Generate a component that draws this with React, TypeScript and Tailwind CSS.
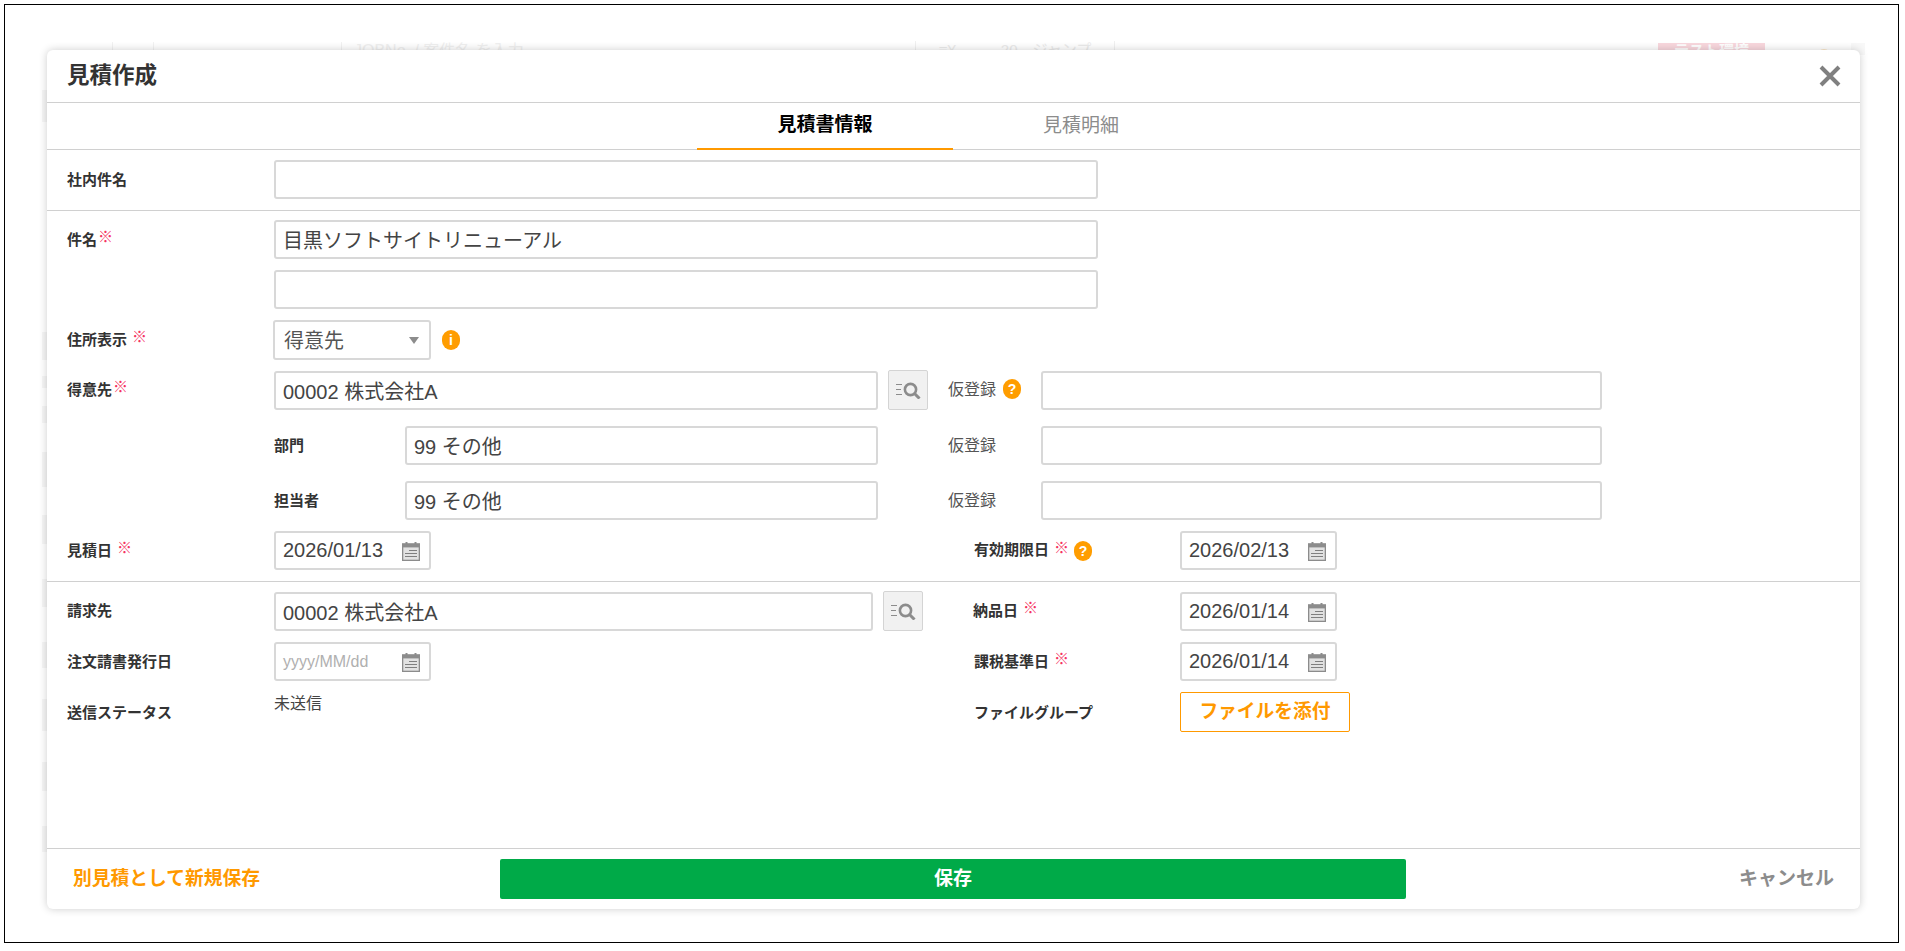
import type { ReactNode } from "react"

const FONT = "[font-family:'Liberation_Sans','Noto_Sans_CJK_JP',sans-serif]"

function Req({ gap }: { gap?: boolean }) {
  return (
    <span className={`text-[15px] font-normal leading-none text-[#f5335f] relative -top-[3px] ${gap ? "ml-[5px]" : "ml-[1px]"}`}>
      ※
    </span>
  )
}

function Label({ children }: { children: ReactNode }) {
  return <span className="text-[15px] font-bold text-[#333] whitespace-nowrap">{children}</span>
}

function TextBox({ value, w, placeholder }: { value?: string; w: string; placeholder?: string }) {
  return (
    <input
      readOnly
      value={value ?? ""}
      placeholder={placeholder}
      className={`${w} h-[39px] shrink-0 rounded-[3px] border-2 border-[#d8d8d8] bg-white px-[7px] text-[20px] text-[#444] outline-none`}
    />
  )
}

function CalendarIcon() {
  return (
    <svg width="18" height="19" viewBox="0 0 18 19" className="absolute right-[9px] top-[9px]">
      <rect x="0.5" y="2" width="17" height="16.5" fill="#e2e2e2" stroke="#8c8c8c" strokeWidth="1.6" />
      <rect x="0" y="2" width="18" height="3.4" fill="#8c8c8c" />
      <rect x="3.5" y="0" width="2" height="3" fill="#8c8c8c" />
      <rect x="12.5" y="0" width="2" height="3" fill="#8c8c8c" />
      <path d="M7 8.5h8M3 11.5h12M3 14.5h12" stroke="#7f7f7f" strokeWidth="1.2" />
    </svg>
  )
}

function DateBox({ value }: { value?: string }) {
  return (
    <div className="relative w-[157px] h-[39px] shrink-0 rounded-[3px] border-2 border-[#d8d8d8] bg-white">
      <span className={`absolute left-[7px] top-0 leading-[35px] ${value ? "text-[20px] text-[#444]" : "text-[16px] text-[#b0b0b0]"}`}>
        {value ?? "yyyy/MM/dd"}
      </span>
      <CalendarIcon />
    </div>
  )
}

function SearchButton() {
  return (
    <button className="w-[40px] h-[40px] shrink-0 rounded-[2px] border border-[#d4d4d4] bg-[#f1f1f1] flex items-center justify-center">
      <svg width="25" height="17" viewBox="0 0 25 17">
        <path d="M0 2.5h6M0 7.5h5M0 12.5h6" stroke="#8c8c8c" strokeWidth="1.2" fill="none" />
        <circle cx="14.5" cy="7.5" r="5.6" stroke="#8c8c8c" strokeWidth="2.6" fill="none" />
        <path d="M18.5 11.5l5 5" stroke="#8c8c8c" strokeWidth="3" fill="none" />
      </svg>
    </button>
  )
}

function Badge({ children, className }: { children: string; className?: string }) {
  return (
    <span className={`w-[18px] h-[20px] shrink-0 rounded-full bg-[#ff9d00] text-white text-[14px] font-bold leading-[20px] text-center ${className ?? ""}`}>
      {children}
    </span>
  )
}

function Row({ className, children }: { className?: string; children: ReactNode }) {
  return <div className={`flex items-center pl-[20px] ${className ?? ""}`}>{children}</div>
}

function Kari({ help }: { help?: boolean }) {
  return (
    <div className="flex items-center w-[93px] shrink-0 text-[16px] text-[#555]">
      仮登録
      {help && <Badge className="ml-[7px] -mt-[3px]">?</Badge>}
    </div>
  )
}

const faintLeft = [
  [90, 32], [332, 28], [376, 12], [406, 17], [452, 35], [515, 29], [579, 28], [642, 26], [699, 32], [762, 29], [826, 26],
]

export default function App() {
  return (
    <div className={`${FONT} relative w-[1905px] h-[951px] overflow-hidden bg-white pl-[4px] pt-[4px]`}>
      <div className="relative w-[1895px] h-[939px] border border-black">
        {/* page behind the dialog, almost washed out */}
        <div className="absolute left-[107px] top-[37px] h-[12px] w-[42px] border-x border-[#f2f2f2]" />
        <div className="absolute left-[336px] top-[37px] pl-[12px] border-l border-[#f2f2f2] text-[16px] leading-[18px] text-[#f0f0f0]">JOBNo. / 案件名 を入力</div>
        <div className="absolute left-[910px] top-[36px] h-[12px] w-[200px] border-x border-[#f0f0f0] text-[15px] leading-[18px] text-[#ebebeb] text-center">≡¥　　　20　ジャンプ</div>
        <div className="absolute left-[1653px] top-[38px] h-[12px] w-[107px] bg-[#f9d8de] text-white text-[15px] leading-[16px] text-center font-bold">テスト環境</div>
        <div className="absolute left-[1812px] top-[44px] w-[14px] h-[14px] rounded-full border-2 border-[#fbe6c8]" />
        <div className="absolute left-[1846px] top-[38px] w-[14px] h-[12px] bg-[#f8f8f8]" />
        {faintLeft.map(([top, h]) => (
          <div key={top} className="absolute left-[37px] w-[6px] bg-[#f6f6f6]" style={{ top: top - 5, height: h }} />
        ))}

        <div className="absolute left-[42px] top-[45px] w-[1813px] h-[859px] flex flex-col rounded-[6px] bg-white shadow-[0_0_9px_rgba(0,0,0,0.2)]">
          <div className="relative h-[53px] shrink-0 flex items-center pl-[20px] border-b border-[#d0d0d0]">
            <h1 className="text-[22.5px] font-bold text-[#333]">見積作成</h1>
            <svg width="22" height="22" viewBox="0 0 22 22" className="absolute right-[19px] top-[15px]">
              <path d="M2 2l18 18M20 2L2 20" stroke="#808080" strokeWidth="4" fill="none" />
            </svg>
          </div>

          <div className="h-[47px] shrink-0 flex pl-[650px] border-b border-[#d0d0d0]">
            <div className="w-[256px] h-[47px] flex items-center justify-center border-b-[2px] border-[#ff9900] text-[19px] font-bold text-black">見積書情報</div>
            <div className="w-[256px] h-[46px] flex items-center justify-center text-[19px] text-[#8c8c8c]">見積明細</div>
          </div>

          <Row className="h-[61px] shrink-0 pb-[2px] border-b border-[#d0d0d0]">
            <div className="w-[207px] pt-[1px]"><Label>社内件名</Label></div>
            <TextBox w="w-[824px]" />
          </Row>

          <div className="shrink-0 pt-[9px] pb-[11px] border-b border-[#d0d0d0] flex flex-col">
            <Row>
              <div className="w-[207px]"><Label>件名</Label><Req /></div>
              <TextBox w="w-[824px]" value="目黒ソフトサイトリニューアル" />
            </Row>
            <Row className="mt-[11px]">
              <div className="w-[207px]" />
              <TextBox w="w-[824px]" />
            </Row>
            <Row className="mt-[11px]">
              <div className="w-[206px]"><Label>住所表示</Label><Req gap /></div>
              <div className="relative w-[158px] h-[40px] rounded-[3px] border-2 border-[#d8d8d8] bg-white pl-[9px] text-[20px] leading-[38px] text-[#555]">
                得意先
                <span className="absolute right-[10px] top-[15px] w-0 h-0 border-x-[5px] border-t-[7px] border-x-transparent border-t-[#8c8c8c]" />
              </div>
              <Badge className="ml-[11px]">i</Badge>
            </Row>
            <Row className="mt-[10px]">
              <div className="w-[207px]"><Label>得意先</Label><Req /></div>
              <TextBox w="w-[604px]" value="00002 株式会社A" />
              <div className="ml-[10px] mr-[20px]"><SearchButton /></div>
              <Kari help />
              <TextBox w="w-[561px]" />
            </Row>
            <Row className="mt-[16px]">
              <div className="w-[207px]" />
              <div className="w-[131px] shrink-0"><Label>部門</Label></div>
              <TextBox w="w-[473px]" value="99 その他" />
              <div className="w-[70px]" />
              <Kari />
              <TextBox w="w-[561px]" />
            </Row>
            <Row className="mt-[16px]">
              <div className="w-[207px]" />
              <div className="w-[131px] shrink-0"><Label>担当者</Label></div>
              <TextBox w="w-[473px]" value="99 その他" />
              <div className="w-[70px]" />
              <Kari />
              <TextBox w="w-[561px]" />
            </Row>
            <Row className="mt-[11px]">
              <div className="w-[207px]"><Label>見積日</Label><Req gap /></div>
              <DateBox value="2026/01/13" />
              <div className="w-[543px]" />
              <div className="flex items-center w-[206px]">
                <Label>有効期限日</Label><Req gap /><Badge className="ml-[5px]">?</Badge>
              </div>
              <DateBox value="2026/02/13" />
            </Row>
          </div>

          <div className="pt-[9px] flex flex-col">
            <Row>
              <div className="w-[207px]"><Label>請求先</Label></div>
              <TextBox w="w-[599px]" value="00002 株式会社A" />
              <div className="ml-[10px]"><SearchButton /></div>
              <div className="w-[50px]" />
              <div className="w-[207px]"><Label>納品日</Label><Req gap /></div>
              <DateBox value="2026/01/14" />
            </Row>
            <Row className="mt-[11px]">
              <div className="w-[207px]"><Label>注文請書発行日</Label></div>
              <DateBox />
              <div className="w-[543px]" />
              <div className="w-[206px]"><Label>課税基準日</Label><Req gap /></div>
              <DateBox value="2026/01/14" />
            </Row>
            <Row className="mt-[11px]">
              <div className="w-[207px] pt-[2px]"><Label>送信ステータス</Label></div>
              <div className="w-[700px] self-start pt-[1px] text-[16px] leading-[22px] text-[#444]">未送信</div>
              <div className="w-[206px] pt-[1px]"><Label>ファイルグループ</Label></div>
              <button className="w-[170px] h-[40px] rounded-[2px] border border-[#ff9900] text-[18.75px] font-bold text-[#ff9900]">ファイルを添付</button>
            </Row>
          </div>

          <div className="mt-auto h-[61px] shrink-0 flex items-center border-t border-[#d0d0d0]">
            <div className="w-[453px] pl-[26px] text-[18.75px] font-bold text-[#ff9900] whitespace-nowrap">別見積として新規保存</div>
            <button className="w-[906px] h-[40px] rounded-[2px] bg-[#00aa48] text-[19px] font-bold text-white">保存</button>
            <div className="flex-1 flex justify-end pr-[26px] text-[19px] font-bold text-[#8c8c8c]">キャンセル</div>
          </div>
        </div>
      </div>
    </div>
  )
}
